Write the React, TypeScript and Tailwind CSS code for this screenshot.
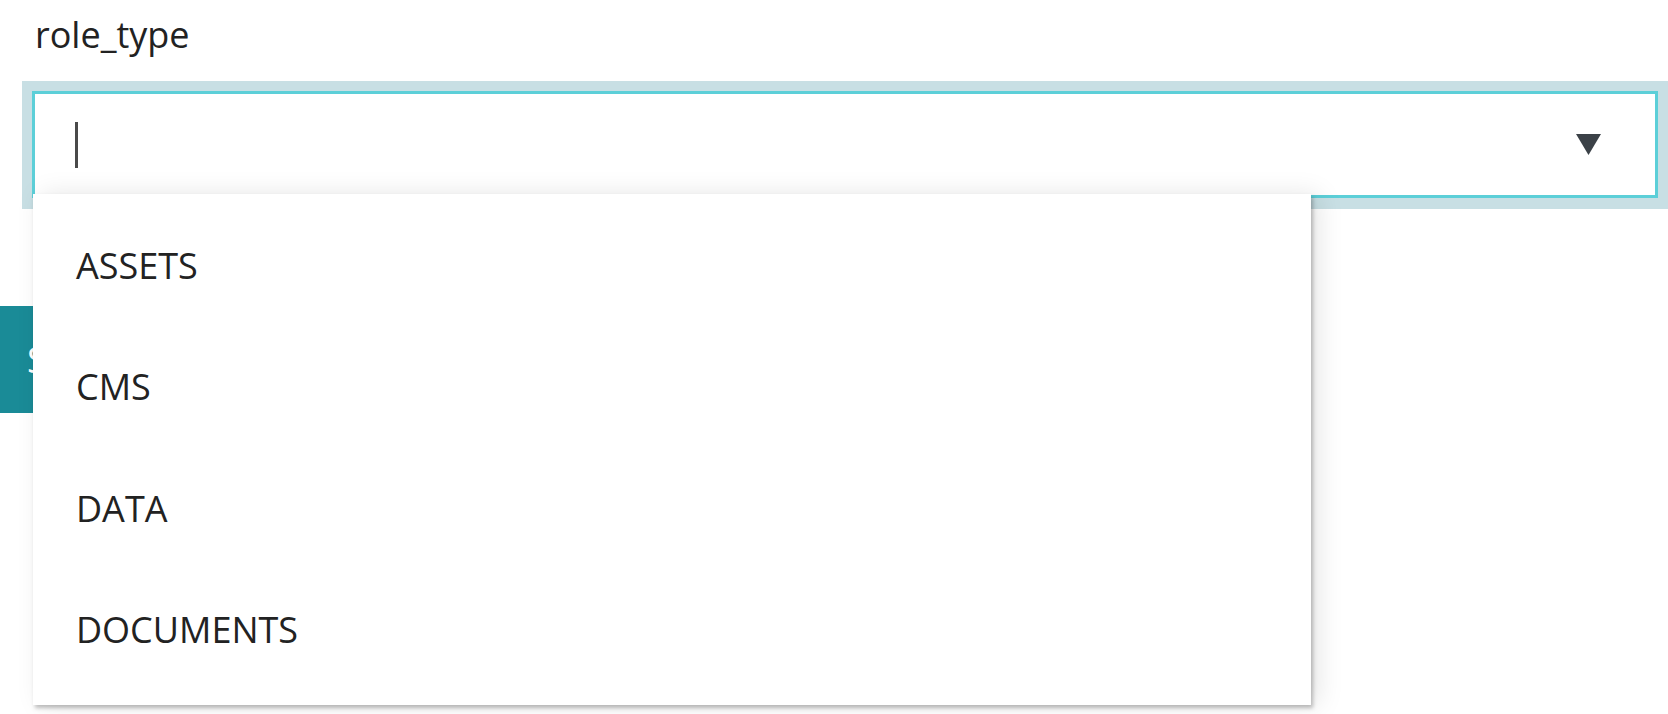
export default function App() {
  const options = ["ASSETS", "CMS", "DATA", "DOCUMENTS"];

  return (
    <div className="relative min-h-[714px] w-[1668px] overflow-hidden bg-white font-['Open_Sans','Noto_Sans',sans-serif] text-[#222]">
      <div className="pl-[35px] pt-[8px] text-[36px]">role_type</div>

      {/* focused select */}
      <div className="mt-[19px] ml-[22px] w-[1646px] bg-[#c8dfe4] p-[10px] pb-[11px]">
        <div className="flex h-[107px] items-center justify-between border-[3px] border-[#5ccfd8] bg-white pl-[40px] pr-[54px]">
          <span className="block h-[46px] w-[3px] bg-[#4a4a4a]" />
          <svg width="25" height="21" viewBox="0 0 25 21">
            <path d="M0 0 H25 L12.5 21 Z" fill="#3b4147" />
          </svg>
        </div>
      </div>

      <div className="mt-[97px] flex h-[107px] w-[140px] items-center bg-[#1a8b97] pl-[27px] text-[36px] text-white">
        S
      </div>

      <ul className="absolute left-[33px] top-[194px] w-[1278px] bg-white pt-[11px] pb-[14px] shadow-[2px_3px_4px_rgba(0,0,0,0.25),8px_0_24px_rgba(0,0,0,0.1)]">
        {options.map((o) => (
          <li key={o} className="flex h-[121.5px] items-center pl-[43px] text-[36px]">
            {o}
          </li>
        ))}
      </ul>
    </div>
  );
}
